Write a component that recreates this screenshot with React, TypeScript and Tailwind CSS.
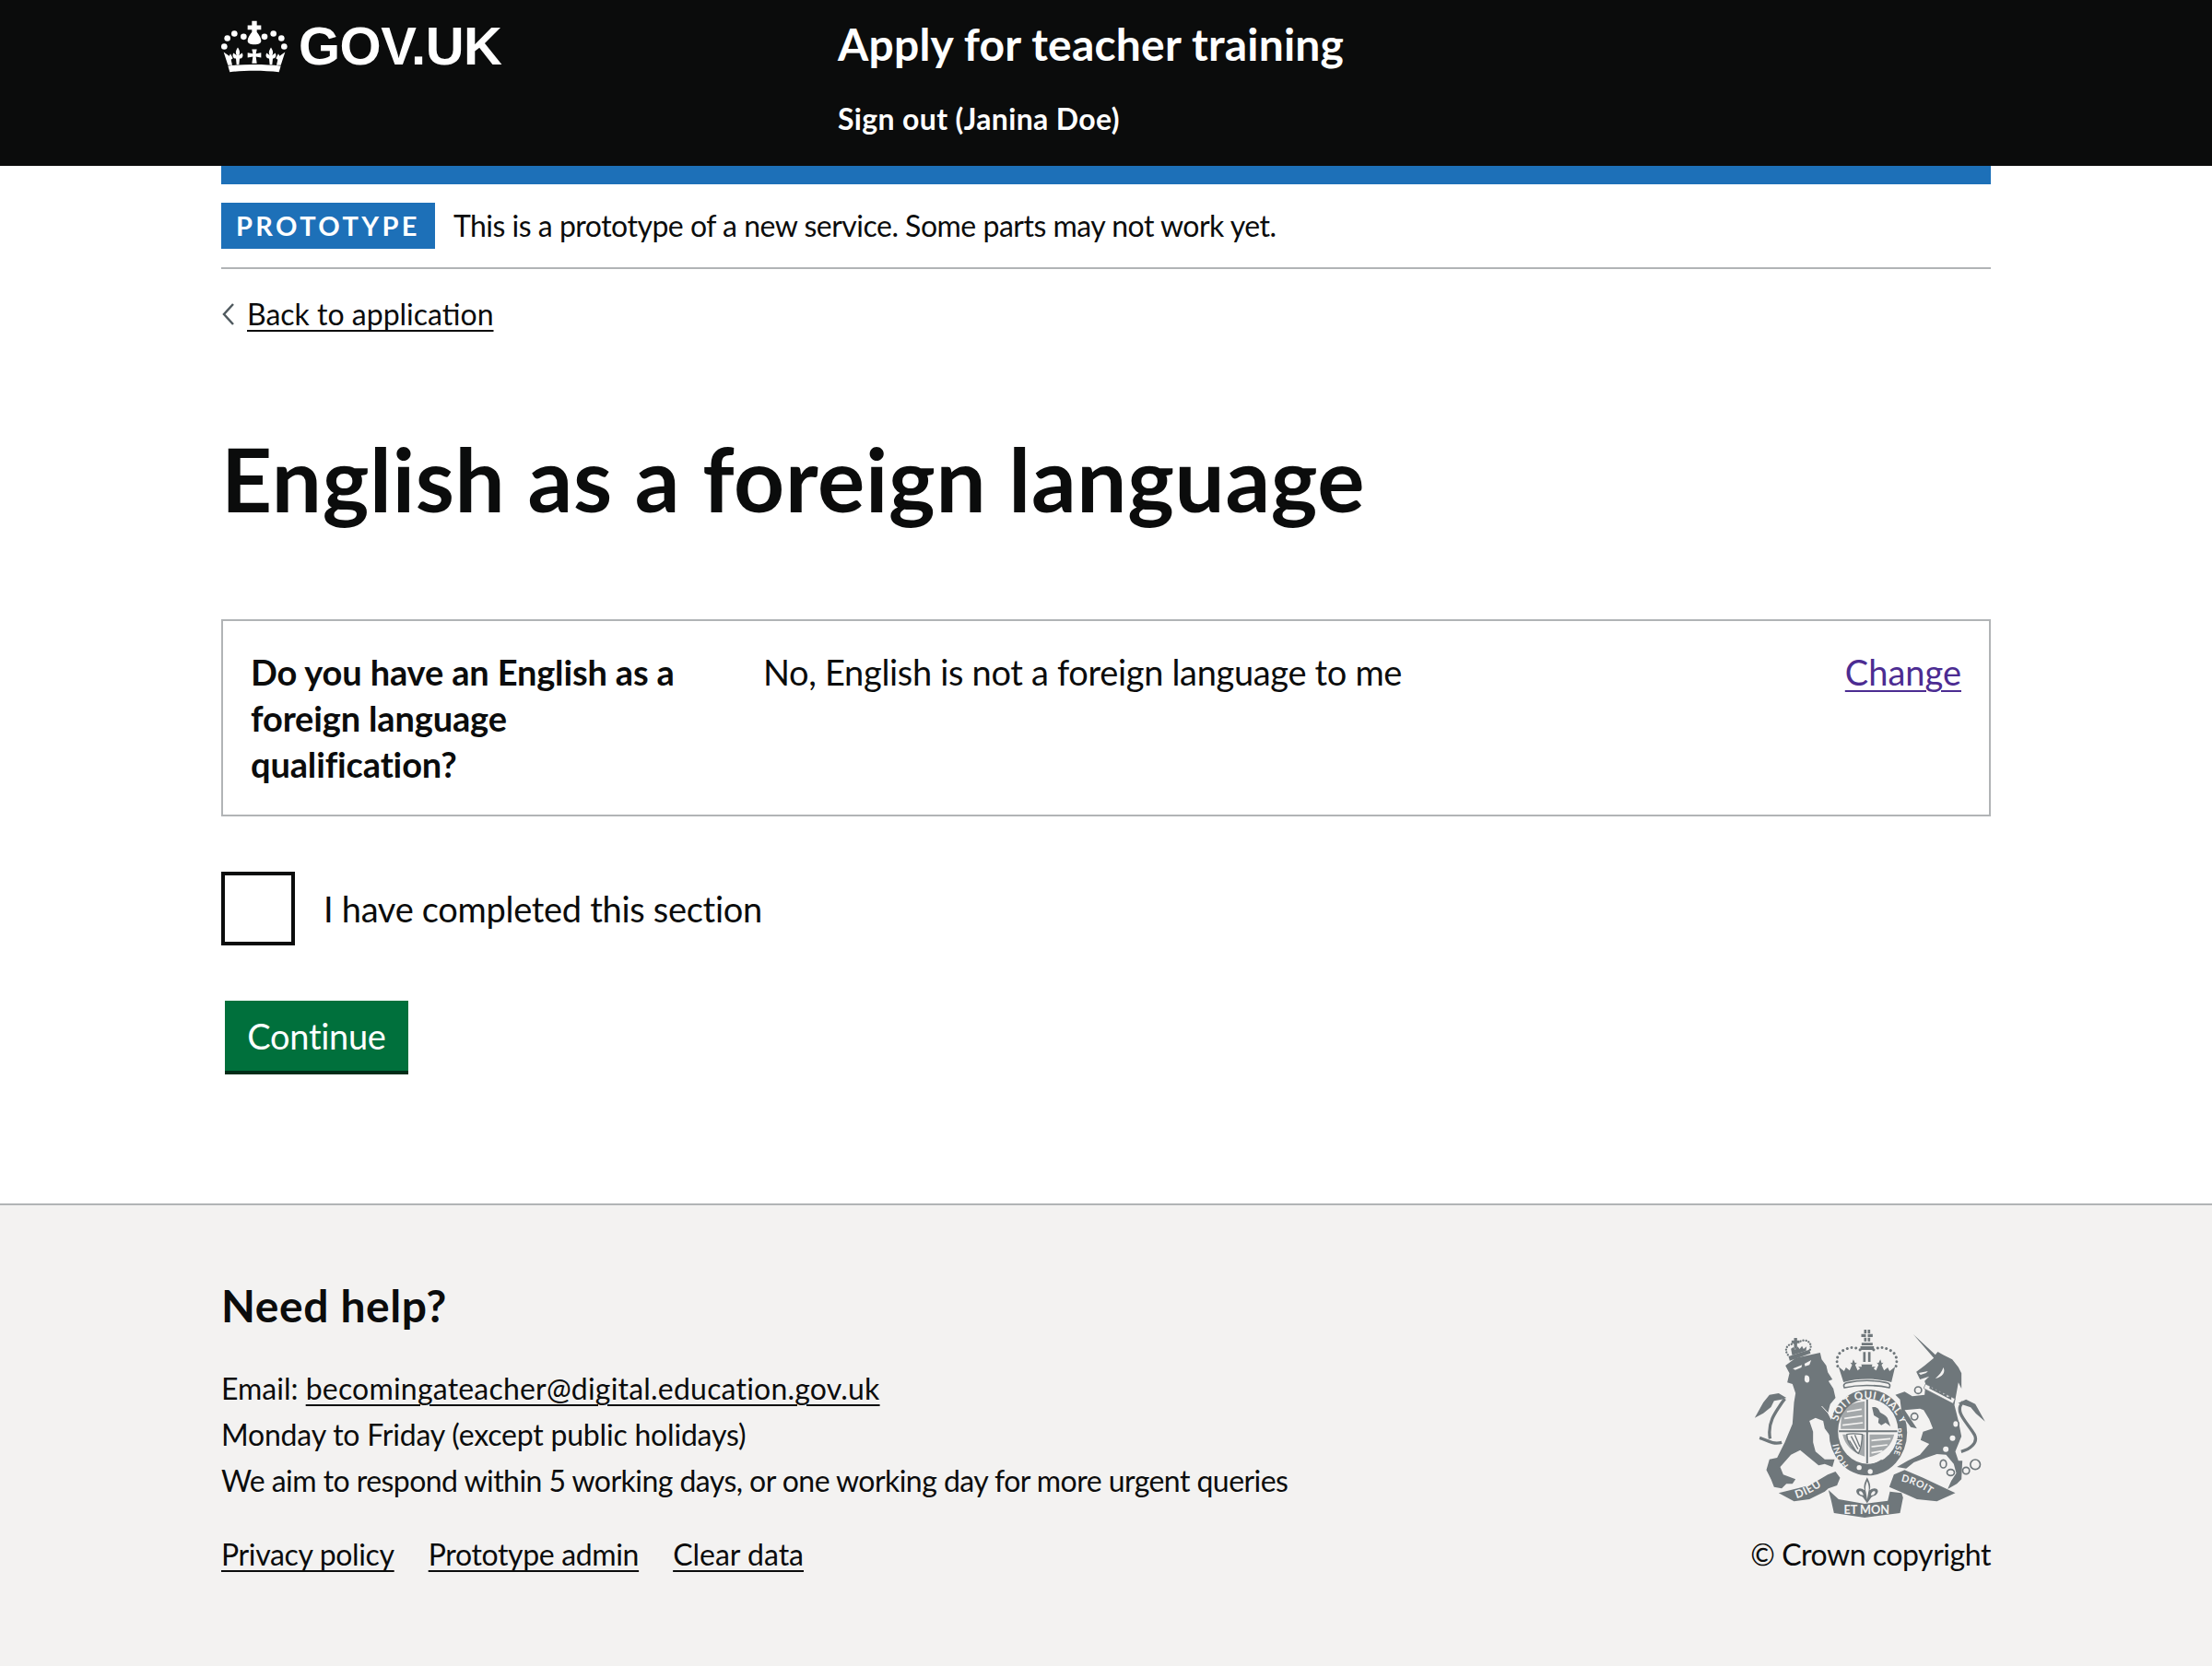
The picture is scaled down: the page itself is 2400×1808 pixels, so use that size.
import React from 'react';

const FONT = "font-['Lato','Noto_Sans',sans-serif]";
const LINK = 'underline underline-offset-[5px] decoration-2';

const FLEUR = 'M0 100C-8 112-8 120-3 126L-14 118C-20 128-14 136-6 136L-4 156H4L6 136C14 136 20 128 14 118L3 126C8 120 8 112 0 100Z';

const Crown: React.FC = () => (
  <svg width="72" height="57" viewBox="12 12 216 170" fill="#fff" aria-hidden="true">
    {[[22, 97], [32, 70], [55, 55], [85, 65], [153, 65], [182, 55], [208, 70], [217, 97]].map(([cx, cy]) => (
      <circle key={cx} cx={cx} cy={cy} r="10" />
    ))}
    <path d="M112 14h16v14h14v14h-14v8c8 10 14 20 14 28 0 8-8 12-22 12s-22-4-22-12c0-8 6-18 14-28v-8H98V28h14z" />
    <g transform="translate(66 0)"><path d={FLEUR} /></g>
    <g transform="translate(174 0)"><path d={FLEUR} /></g>
    <path d="M112 106h16l-3 14 17-3v16l-17-3 3 22h-16l3-22-17 3v-16l17 3z" />
    <path d="M20 115L38 128 42 120 50 135 44 140 48 158H34Z" />
    <path d="M220 115L202 128 198 120 190 135 196 140 192 158H206Z" />
    <path d="M34 160C90 154 150 154 206 160L200 180C150 174 90 174 40 180Z" />
  </svg>
);

const Crest: React.FC = () => (
  <svg width="252" height="205" viewBox="70 70 755 615" fill="#6f777b" aria-hidden="true">
    <defs>
      <path id="garter" d="M343 372C355 320 395 298 440 298C490 298 530 330 552 392" fill="none" />
      <path id="garter-l" d="M378 515C358 495 344 460 342 415" fill="none" />
      <path id="garter-r" d="M530 395C540 440 530 485 498 520" fill="none" />
      <path id="ribbon-l" d="M208 622C245 612 280 590 320 560" fill="none" />
      <path id="ribbon-r" d="M548 566C590 575 630 595 672 630" fill="none" />
    </defs>

    {/* lion */}
    <path d="M172 190L205 165 285 148 290 170 305 190 310 212 325 235 312 240 328 265 335 295 318 315 310 345 330 385 345 400 345 425 330 420 322 425 300 395 295 370 270 360 250 370 262 405 262 440 270 470 300 495 332 495 325 520 300 510 280 515 250 490 220 465 190 480 155 520 165 545 205 560 195 575 175 575 160 590 135 585 125 560 110 530 120 495 145 490 170 440 195 380 200 310 205 280 195 250 178 245 185 215Z" />
    <path d="M175 295L150 280 120 285 100 310 72 360 100 345 125 325 135 305 160 300Z" />
    <path d="M170 298C140 340 112 375 122 428M88 425C110 432 130 448 160 440" fill="none" stroke="#6f777b" strokeWidth="10" />
    <path d="M196 200L226 188 224 196 204 204ZM234 184L256 172 250 188 236 192ZM236 222C244 220 250 224 250 232 252 244 244 248 238 244 232 238 234 230 236 222Z" fill="#f3f2f1" />
    <path d="M290 322L330 365 346 412" fill="none" stroke="#f3f2f1" strokeWidth="3" />
    <path d="M182 160L250 138 254 150 186 174Z" />
    <path d="M180 155C168 140 176 122 192 120M252 138C260 122 248 106 230 108M192 120L210 112M230 108L216 112" fill="none" stroke="#6f777b" strokeWidth="7" strokeLinecap="round" strokeDasharray="0.1 9" />
    <path d="M200 100h10v8h8v9h-8v18h-10v-18h-8v-9h8z" />
    <path d="M190 135l8-5 6 8 8-10 6 8 8-10 5 10 10-8-2 14-45 14z" />

    {/* crown above shield */}
    <path d="M428 73h8v12h-8zM440 73h8v12h-8zM419 87h15v10h-15zM440 87h16v10h-16zM428 99h8v12h-8zM440 99h8v12h-8z" />
    <path d="M420 116h36v8h-36zM416 127h44v12h-44z" />
    <path d="M425 146h8v32h-8zM441 146h8v32h-8z" />
    <path d="M342 192C336 170 342 148 362 140C386 126 406 130 426 146M532 192C538 170 532 148 512 140C488 126 468 130 448 146" fill="none" stroke="#6f777b" strokeWidth="9" strokeLinecap="round" strokeDasharray="0.1 14.500" />
    <path d="M345 194L363 208 369 196 381 206 389 188 383 180 389 182 393 170 399 182 405 180 399 188 407 206 415 200 409 194H421L419 186H455L453 194H465L459 200 467 206 475 188 469 180 475 182 481 170 485 182 491 180 485 188 493 206 505 196 511 208 529 194 517 244C469 230 409 230 361 244Z" />
    <path d="M364 262C360 254 362 248 372 246C418 236 458 236 502 246C512 248 514 254 510 262C466 252 408 252 364 262Z" fill="#f3f2f1" stroke="#6f777b" strokeWidth="5" />

    {/* shield and garter */}
    <ellipse cx="441" cy="408" rx="127" ry="140" />
    <ellipse cx="441" cy="404" rx="98" ry="106" fill="#f3f2f1" />
    <path d="M346 404h190M438 300v208" stroke="#6f777b" strokeWidth="6" fill="none" />
    <path d="M362 330C380 316 404 308 430 306V396H352C352 372 354 348 362 330Z" opacity="0.6" />
    <path d="M358 414H430V486C392 474 366 450 358 414ZM446 414H526C518 450 490 476 446 488Z" opacity="0.6" />
    <path d="M372 340L420 332M364 362L422 354M358 384L424 376M452 434L514 428M452 454L504 448M452 474L488 468" stroke="#f3f2f1" strokeWidth="5" fill="none" />
    <path d="M454 326C468 322 476 330 480 342C488 348 498 350 504 360L514 388 498 376 484 384 474 376 476 362 460 352Z" />
    <path d="M372 414C386 410 408 412 422 414C422 434 418 458 410 476C392 466 372 438 372 414Z" fill="#f3f2f1" stroke="#6f777b" strokeWidth="4" />
    <path d="M386 420L408 462M398 416L414 454M380 434L402 470" stroke="#6f777b" strokeWidth="4" fill="none" />
    <path d="M366 508C370 498 378 494 384 500C410 514 446 522 484 496L498 508C458 534 414 538 378 520C370 520 364 516 366 508Z" />
    <circle cx="412" cy="522" r="8" fill="#f3f2f1" />
    <circle cx="448" cy="535" r="8" fill="#f3f2f1" />
    <text fontFamily="Lato" fontWeight="700" fontSize="35" fill="#f3f2f1" letterSpacing="1">
      <textPath href="#garter">SOIT QUI MAL Y</textPath>
    </text>
    <text fontFamily="Lato" fontWeight="700" fontSize="28" fill="#f3f2f1" letterSpacing="2">
      <textPath href="#garter-l">HONI</textPath>
    </text>
    <text fontFamily="Lato" fontWeight="700" fontSize="26" fill="#f3f2f1" letterSpacing="1">
      <textPath href="#garter-r">PENSE</textPath>
    </text>

    {/* unicorn */}
    <path d="M588 88L660 155 668 145 685 155 715 170 735 195 745 215 745 265 735 245 725 300 722 318 735 370 745 420 725 470 735 500 748 500 745 560 730 575 700 592 712 565 728 540 720 510 695 480 665 478 630 490 590 505 565 525 535 520 570 500 610 480 640 445 612 432 620 405 652 395 640 365 622 335 610 330 560 335 600 395 580 390 565 370 550 340 545 300 530 285 560 275 585 290 625 285 628 250 625 240 640 225 610 235 598 210 625 190 655 165Z" />
    <path d="M686 196C694 212 684 226 660 232C672 222 682 210 686 196ZM606 214L636 208 630 214 612 220Z" fill="#f3f2f1" />
    <path d="M628 250L724 298 718 314 622 264Z" fill="#f3f2f1" stroke="#6f777b" strokeWidth="2" />
    <path d="M640 264L644 254 650 264 660 258 662 270 672 264 674 276 684 272 686 284 696 280 698 292 712 288 712 302Z" />
    <path d="M734 312L760 300 790 315 822 372 792 346 775 326Z" />
    <path d="M750 308C718 340 766 376 788 416C800 442 772 462 744 470" fill="none" stroke="#6f777b" strokeWidth="10" />
    <circle cx="604" cy="270" r="11" fill="#f3f2f1" stroke="#6f777b" strokeWidth="5" />
    <circle cx="592" cy="356" r="11" fill="#f3f2f1" stroke="#6f777b" strokeWidth="5" />
    <ellipse cx="726" cy="380" rx="10" ry="12" fill="#f3f2f1" stroke="#6f777b" strokeWidth="5" />
    <circle cx="716" cy="426" r="9" fill="#f3f2f1" />
    <circle cx="694" cy="462" r="9" fill="#f3f2f1" />
    <ellipse cx="686" cy="510" rx="10" ry="13" fill="#f3f2f1" stroke="#6f777b" strokeWidth="5" />
    <ellipse cx="710" cy="538" rx="12" ry="10" fill="#f3f2f1" stroke="#6f777b" strokeWidth="5" />
    <circle cx="760" cy="532" r="11" fill="#f3f2f1" stroke="#6f777b" strokeWidth="5" />
    <circle cx="790" cy="512" r="16" fill="#f3f2f1" stroke="#6f777b" strokeWidth="5" />

    {/* motto */}
    <path d="M150 605L250 580 310 545 335 535 350 555 340 580 312 590 300 600 250 625 200 632Z" />
    <path d="M312 595L345 625 430 640 505 630 512 600 550 605 555 620 545 670 430 685 330 670 320 625Z" />
    <path d="M525 545L560 530 620 555 725 605 665 632 600 625 545 600 510 585Z" />
    <path d="M438 554C432 568 424 580 430 596C416 584 398 590 404 604C408 614 418 614 424 618L438 638 452 618C458 614 468 614 472 604C478 590 460 584 446 596C452 580 444 568 438 554Z" />
    <path d="M438 566C434 576 430 588 434 602L438 626 442 602C446 588 442 576 438 566ZM412 600C418 596 424 602 426 612C418 612 410 608 412 600ZM464 600C458 596 452 602 450 612C458 612 466 608 464 600Z" fill="#f3f2f1" />
    <text fontFamily="Lato" fontWeight="700" fontSize="36" fill="#f3f2f1" letterSpacing="2">
      <textPath href="#ribbon-l">DIEU</textPath>
    </text>
    <text fontFamily="Lato" fontWeight="700" fontSize="32" fill="#f3f2f1" letterSpacing="1.500">
      <textPath href="#ribbon-r">DROIT</textPath>
    </text>
    <text x="436" y="672" textAnchor="middle" fontFamily="Lato" fontWeight="700" fontSize="38" fill="#f3f2f1">ET MON</text>
  </svg>
);

const App: React.FC = () => {
  return (
    <div className={`${FONT} min-h-[1808px] flex flex-col bg-white text-[#0b0c0c]`}>
      <header className="bg-[#0b0c0c] h-[180px] text-white">
        <div className="w-[1920px] mx-auto flex">
          <div className="w-[669px] flex items-center gap-[12px] h-[100px]">
            <Crown />
            <span className="font-['Liberation_Sans',sans-serif] font-bold text-[58px] tracking-[-0.5px] leading-none">GOV.UK</span>
          </div>
          <div>
            <div className="font-bold text-[48px] tracking-[0.2px] leading-[100px] -mt-[2px]">Apply for teacher training</div>
            <a className="block font-bold text-[32px] tracking-[0.35px] leading-[40px] mt-[11px]">Sign out (Janina Doe)</a>
          </div>
        </div>
      </header>

      <main className="w-[1920px] mx-auto flex-1">
        <div className="h-[20px] bg-[#1d70b8]" />
        <div className="flex items-center gap-[20px] h-[50px] mt-[20px]">
          <strong className="bg-[#1d70b8] text-white font-bold text-[29px] tracking-[3.4px] h-[50px] leading-[50px] pl-[16px] pr-[16px]">PROTOTYPE</strong>
          <p className="text-[32px] tracking-[-0.5px]">This is a prototype of a new service. Some parts may not work yet.</p>
        </div>
        <div className="h-[2px] bg-[#b1b4b6] mt-[20px]" />

        <div className="flex items-center gap-[10px] mt-[29px] h-[40px]">
          <svg width="18" height="26" viewBox="0 0 18 26" fill="none" stroke="#505a5f" strokeWidth="2.500" aria-hidden="true">
            <path d="M13 2L3 13l10 11" />
          </svg>
          <a className={`text-[32px] ${LINK}`}>Back to application</a>
        </div>

        <h1 className="font-bold text-[96px] tracking-[0.7px] leading-[100px] mt-[108px]">English as a foreign language</h1>

        <div className="border-2 border-[#b1b4b6] mt-[103px] h-[214px] px-[30px] pt-[30px] flex text-[38px] leading-[50px]">
          <div className="w-[556px] font-bold tracking-[-0.15px] pr-[60px]">Do you have an English as a foreign language qualification?</div>
          <div className="flex-1 tracking-[-0.33px]">No, English is not a foreign language to me</div>
          <a className={`text-[#4c2c92] ${LINK}`}>Change</a>
        </div>

        <div className="flex items-center gap-[30px] mt-[60px]">
          <div className="size-[80px] border-4 border-[#0b0c0c] bg-white" />
          <span className="text-[38px] tracking-[-0.3px] ml-[1px]">I have completed this section</span>
        </div>

        <button className="block mt-[60px] ml-[4px] w-[199px] h-[80px] bg-[#00703c] text-white text-[38px] tracking-[-0.3px] leading-[76px] text-center border-b-4 border-[#002d18]">Continue</button>
      </main>

      <footer className="border-t-2 border-[#b1b4b6] bg-[#f3f2f1] h-[502px]">
        <div className="w-[1920px] mx-auto flex justify-between pt-[79px]">
          <div>
            <h2 className="font-bold text-[48px] tracking-[0.6px] leading-[60px]">Need help?</h2>
            <div className="text-[32px] leading-[50px] mt-[35px]">
              <p>Email: <a className={`${LINK} tracking-[0.2px]`}>becomingateacher@digital.education.gov.uk</a></p>
              <p className="tracking-[-0.2px]">Monday to Friday (except public holidays)</p>
              <p className="tracking-[-0.55px]">We aim to respond within 5 working days, or one working day for more urgent queries</p>
            </div>
            <div className="flex gap-[37px] text-[32px] leading-[50px] mt-[30px]">
              <a className={`${LINK} tracking-[-0.35px]`}>Privacy policy</a>
              <a className={`${LINK} tracking-[-0.35px]`}>Prototype admin</a>
              <a className={LINK}>Clear data</a>
            </div>
          </div>
          <div className="flex flex-col items-end pt-[55px]">
            <div className="pr-[5px]"><Crest /></div>
            <span className="text-[32px] tracking-[-0.45px] leading-[50px] mt-[15px]">© Crown copyright</span>
          </div>
        </div>
      </footer>
    </div>
  );
};

export default App;
